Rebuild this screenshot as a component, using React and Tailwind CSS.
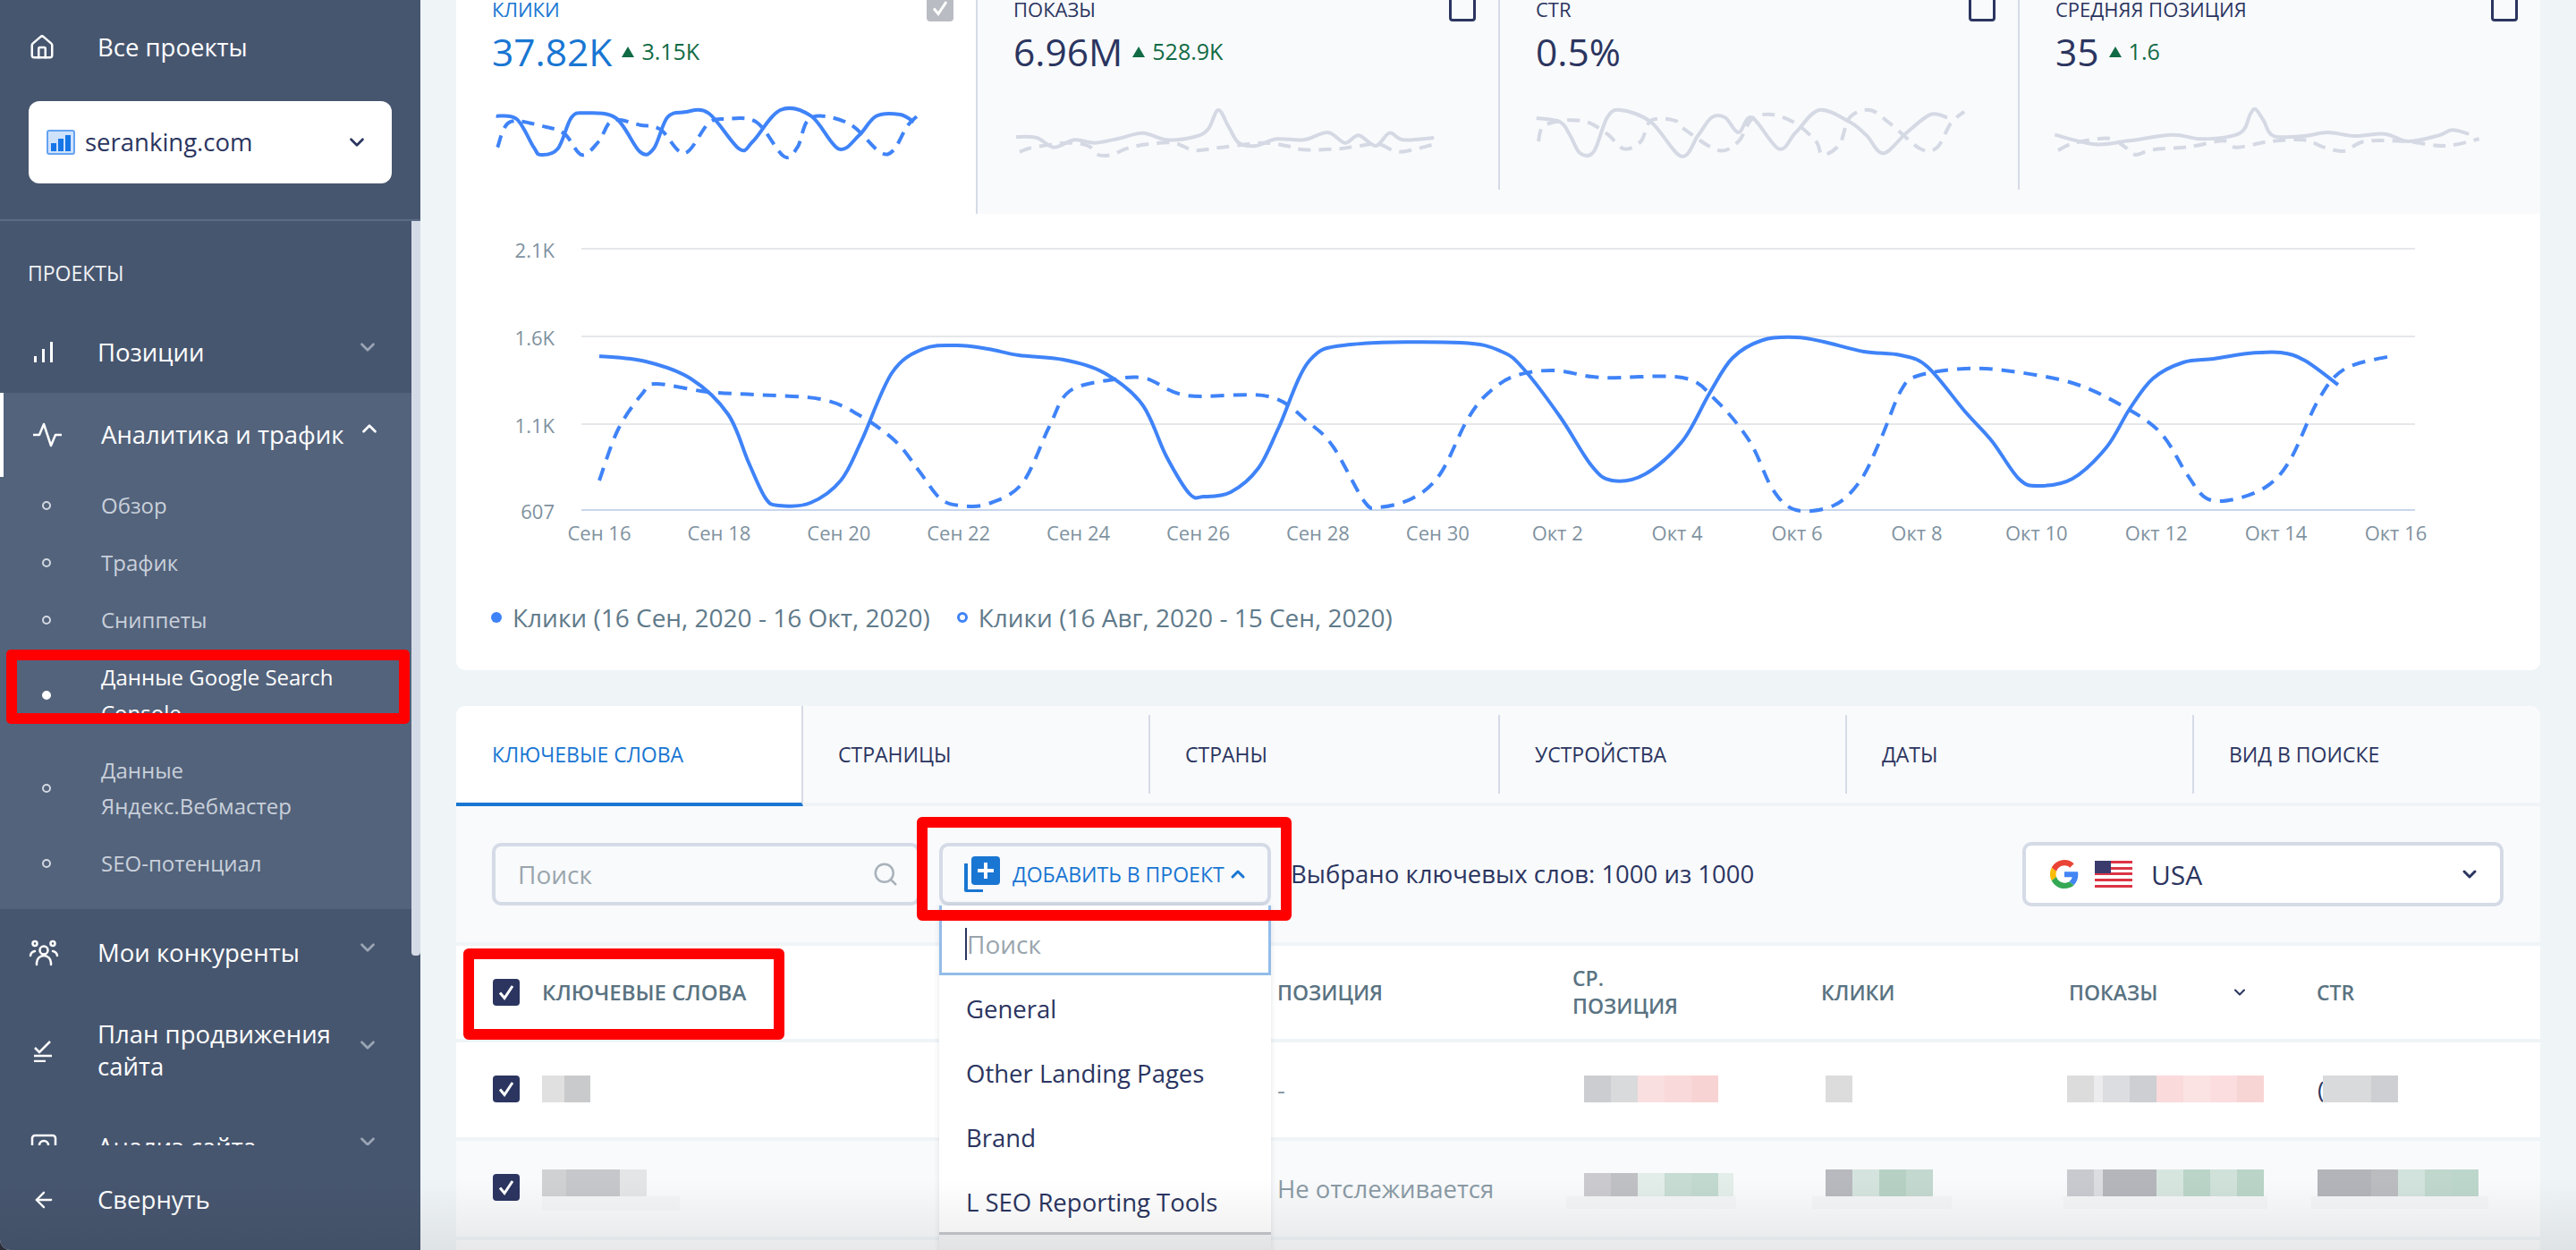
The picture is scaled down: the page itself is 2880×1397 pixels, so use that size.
import React from 'react';
import { ChevronDown, ChevronUp, Search, ArrowLeft, House } from 'lucide-react';

// turns a list of points into a smooth curve
const smooth = (pts) => {
    let d = `M${pts[0][0]} ${pts[0][1]}`;
    for (let i = 0; i < pts.length - 1; i++) {
        const p0 = pts[Math.max(i - 1, 0)];
        const p1 = pts[i];
        const p2 = pts[i + 1];
        const p3 = pts[Math.min(i + 2, pts.length - 1)];
        const c1x = p1[0] + (p2[0] - p0[0]) / 6;
        const c1y = p1[1] + (p2[1] - p0[1]) / 6;
        const c2x = p2[0] - (p3[0] - p1[0]) / 6;
        const c2y = p2[1] - (p3[1] - p1[1]) / 6;
        d += ` C${c1x} ${c1y} ${c2x} ${c2y} ${p2[0]} ${p2[1]}`;
    }
    return d;
};

const mainSolid = [[670,398],[722,404],[772,423],[814,463],[837,517],[856,557],[871,565],[906,562],[940,537],[963,493],[997,417],[1032,390],[1070,386],[1105,390],[1139,397],[1189,402],[1235,417],[1277,452],[1304,510],[1330,552],[1346,555],[1376,550],[1407,523],[1430,477],[1464,403],[1510,385],[1633,383],[1679,393],[1704,413],[1745,467],[1779,520],[1802,537],[1839,530],[1881,493],[1911,440],[1937,400],[1971,380],[2008,377],[2039,382],[2084,393],[2125,397],[2155,410],[2197,460],[2227,493],[2257,535],[2279,543],[2317,535],[2355,500],[2381,457],[2407,423],[2441,405],[2475,401],[2513,395],[2550,394],[2577,403],[2614,430]];
const mainDashed = [[670,537],[691,480],[718,440],[733,429],[791,438],[844,441],[917,446],[959,463],[1001,493],[1028,527],[1051,557],[1074,565],[1105,563],[1143,540],[1173,477],[1196,437],[1246,424],[1281,423],[1327,442],[1418,443],[1464,473],[1491,500],[1525,560],[1541,567],[1579,557],[1610,530],[1640,470],[1663,440],[1694,420],[1738,414],[1790,422],[1881,422],[1918,447],[1956,493],[1982,547],[2008,570],[2050,565],[2080,537],[2103,490],[2125,437],[2144,420],[2197,412],[2249,415],[2317,428],[2370,452],[2415,483],[2445,530],[2467,557],[2498,558],[2535,543],[2561,513],[2592,447],[2622,412],[2678,397]];

const metrics = [
    {
        label: 'КЛИКИ', value: '37.82K', delta: '3.15K', active: true, view: '60 370 640 180', w: 'w-[490px]',
        solid: [[70,405],[100,415],[125,510],[135,535],[160,515],[180,410],[200,395],[245,412],[280,525],[300,515],[320,410],[345,392],[380,395],[425,515],[445,490],[485,385],[530,405],[570,515],[600,470],[625,405],[660,400],[680,425]],
        dashed: [[72,510],[90,425],[140,440],[170,465],[195,535],[220,490],[240,420],[280,435],[310,450],[345,530],[380,430],[405,415],[450,425],[490,540],[510,510],[530,410],[585,430],[630,525],[650,520],[670,440],[685,405]],
    },
    {
        label: 'ПОКАЗЫ', value: '6.96M', delta: '528.9K', view: '822 370 640 180', w: 'w-[490px]',
        solid: [[830,475],[860,478],[885,510],[915,485],[945,495],[980,480],[1015,462],[1050,485],[1090,475],[1110,450],[1125,385],[1140,440],[1155,495],[1180,505],[1210,482],[1250,485],[1285,460],[1310,495],[1330,470],[1355,505],[1375,462],[1395,485],[1440,478]],
        dashed: [[835,525],[855,510],[905,495],[935,505],[950,535],[970,535],[990,515],[1020,500],[1060,495],[1090,520],[1130,510],[1190,495],[1225,505],[1250,518],[1300,515],[1330,505],[1360,500],[1390,525],[1440,500]],
    },
    {
        label: 'CTR', value: '0.5%', view: '20 370 664 180', w: 'w-[500px]',
        solid: [[25,412],[60,425],[75,470],[90,530],[110,525],[130,410],[150,385],[195,425],[240,540],[265,470],[285,410],[305,410],[325,460],[345,410],[385,515],[410,460],[445,385],[490,425],[515,470],[540,530],[575,460],[610,400],[635,410]],
        dashed: [[28,490],[35,440],[65,420],[100,425],[130,465],[155,515],[180,490],[195,420],[230,420],[245,450],[295,520],[325,490],[345,415],[375,400],[410,430],[440,490],[450,535],[475,500],[490,410],[520,385],[550,430],[595,515],[620,510],[640,430],[660,390]],
    },
    {
        label: 'СРЕДНЯЯ ПОЗИЦИЯ', value: '35', delta: '1.6', view: '797 370 664 180', w: 'w-[500px]',
        solid: [[800,468],[860,500],[910,488],[975,468],[1020,482],[1075,462],[1090,400],[1098,382],[1110,420],[1125,472],[1170,472],[1205,460],[1245,472],[1290,465],[1325,490],[1370,470],[1390,452],[1415,465]],
        dashed: [[805,520],[830,495],[880,480],[905,510],[920,535],[945,518],[1000,508],[1050,488],[1070,510],[1120,490],[1170,485],[1200,510],[1230,522],[1260,490],[1320,490],[1380,505],[1430,482]],
    },
];

const ticksX = ['Сен 16', 'Сен 18', 'Сен 20', 'Сен 22', 'Сен 24', 'Сен 26', 'Сен 28', 'Сен 30', 'Окт 2', 'Окт 4', 'Окт 6', 'Окт 8', 'Окт 10', 'Окт 12', 'Окт 14', 'Окт 16'];
const ticksY = [['2.1K', 278], ['1.6K', 376], ['1.1K', 474], ['607', 570]];
const tabs = ['КЛЮЧЕВЫЕ СЛОВА', 'СТРАНИЦЫ', 'СТРАНЫ', 'УСТРОЙСТВА', 'ДАТЫ', 'ВИД В ПОИСКЕ'];
const subItems = ['Обзор', 'Трафик', 'Сниппеты'];
const projects = ['General', 'Other Landing Pages', 'Brand', 'L SEO Reporting Tools'];

const Blur = ({ parts, className = '' }) => (
    <div className={`flex ${className}`}>
        {parts.map((p, i) => (
            <div key={i} className={p} />
        ))}
    </div>
);

const CheckBox = ({ className = '' }) => (
    <div className={`w-[30px] h-[30px] rounded-[4px] bg-[#2b3560] flex items-center justify-center shrink-0 ${className}`}>
        <svg width="22" height="22" viewBox="0 0 22 22" fill="none">
            <path d="M4 11.5l5 6L18 4" stroke="white" strokeWidth="3" />
        </svg>
    </div>
);

const Dot = ({ active }) => (
    <span className={`w-[10px] h-[10px] rounded-full border-2 ${active ? 'bg-white border-white' : 'border-[#d3d8e0]'}`} />
);

const MenuRow = ({ icon, heightClass, children }) => (
    <div className={`flex items-center pr-[36px] ${heightClass}`}>
        <div className="w-[109px] pl-[32px] shrink-0 flex items-center">{icon}</div>
        <div className="flex-1 text-[27.5px] leading-[36px] text-white">{children}</div>
        <ChevronDown size={26} strokeWidth={2.5} className="text-[#9aa5b5] mb-[12px]" />
    </div>
);

const SubRow = ({ heightClass, active, children }) => (
    <div className={`flex items-center ${heightClass}`}>
        <div className="w-[113px] pl-[47px] shrink-0 flex items-center"><Dot active={active} /></div>
        <div className={`text-[24px] leading-[40px] ${active ? 'text-white' : 'text-[#c9d0da]'}`}>{children}</div>
    </div>
);

const Sidebar = () => (
    <aside className="w-[470px] shrink-0 bg-[#47566f] flex flex-col h-full">
        <div className="h-[247px] shrink-0 border-b-2 border-[#5d6c86] px-[32px]">
            <div className="flex items-center h-[113px] pb-[8px]">
                <House size={30} strokeWidth={2} className="text-white" />
                <span className="ml-[47px] text-[27.5px] text-white">Все проекты</span>
            </div>
            <div className="h-[92px] bg-white rounded-[12px] flex items-center pl-[20px] pr-[26px]">
                <svg width="32" height="28" viewBox="0 0 32 28" className="shrink-0">
                    <rect x="1" y="1" width="30" height="26" rx="2" fill="#cfe2fb" stroke="#66a3f2" strokeWidth="2" />
                    <rect x="5" y="15" width="6" height="9" fill="#1676e8" />
                    <rect x="13" y="10" width="6" height="14" fill="#1676e8" />
                    <rect x="21" y="6" width="6" height="18" fill="#1676e8" />
                </svg>
                <span className="ml-[11px] flex-1 text-[27.5px] text-[#2b3560]">seranking.com</span>
                <ChevronDown size={26} strokeWidth={2.5} className="text-[#2b3560]" />
            </div>
        </div>
        <div className="flex h-[1033px] shrink-0 overflow-hidden">
            <div className="w-[460px] shrink-0">
                <div className="h-[102px] pl-[31px] pt-[14px] flex items-center text-[23px] text-[#f0f2f5]">ПРОЕКТЫ</div>
                <MenuRow
                    heightClass="h-[90px]"
                    icon={
                        <svg width="30" height="24" viewBox="0 0 30 24" fill="#fff" className="ml-[5px]">
                            <rect x="1" y="16" width="3" height="7" />
                            <rect x="10" y="8" width="3" height="15" />
                            <rect x="19" y="0" width="3" height="23" />
                        </svg>
                    }
                >
                    Позиции
                </MenuRow>
                <div className="bg-[#53637c] pb-[19px]">
                    <div className="h-[94px] flex items-center border-l-4 border-white pr-[40px]">
                        <div className="w-[109px] pl-[33px] shrink-0">
                            <svg width="32" height="28" viewBox="0 0 32 28" fill="none" stroke="#fff" strokeWidth="2.5" strokeLinejoin="round">
                                <path d="M0 14h7l5-12 8 24 5-12h7" />
                            </svg>
                        </div>
                        <div className="flex-1 text-[27.5px] text-white whitespace-nowrap">Аналитика и трафик</div>
                        <ChevronUp size={26} strokeWidth={2.5} className="text-white mb-[14px] -mr-[6px]" />
                    </div>
                    {subItems.map((s) => (
                        <SubRow key={s} heightClass="h-[64px]">{s}</SubRow>
                    ))}
                    <div className="relative">
                        <SubRow heightClass="h-[104px]" active>
                            Данные Google Search
                            <br />
                            Console
                        </SubRow>
                        <div className="absolute left-[7px] top-[1px] w-[451px] h-[83px] border-[12px] border-[#ff0000] rounded-[5px]" />
                    </div>
                    <SubRow heightClass="h-[104px]">
                        Данные
                        <br />
                        Яндекс.Вебмастер
                    </SubRow>
                    <SubRow heightClass="h-[64px]">SEO-потенциал</SubRow>
                </div>
                <MenuRow
                    heightClass="h-[98px]"
                    icon={
                        <svg width="34" height="30" viewBox="0 0 34 30" fill="none" stroke="#fff" strokeWidth="2.5" strokeLinecap="round">
                            <circle cx="17" cy="12" r="4.5" />
                            <path d="M9 28v-2a8 8 0 0 1 16 0v2" />
                            <circle cx="7" cy="4.5" r="2.5" />
                            <circle cx="27" cy="4.5" r="2.5" />
                            <path d="M2 18a6 6 0 0 1 5-5" />
                            <path d="M32 18a6 6 0 0 0-5-5" />
                        </svg>
                    }
                >
                    Мои конкуренты
                </MenuRow>
                <MenuRow
                    heightClass="h-[120px]"
                    icon={
                        <svg width="30" height="26" viewBox="0 0 30 26" fill="none" stroke="#fff" strokeWidth="2.5" className="ml-[5px]">
                            <path d="M2 10l5 5L19 3" />
                            <path d="M1 19h20" />
                            <path d="M1 25h13" />
                        </svg>
                    }
                >
                    План продвижения
                    <br />
                    сайта
                </MenuRow>
                <MenuRow
                    heightClass="h-[96px]"
                    icon={
                        <svg width="30" height="30" viewBox="0 0 30 30" fill="none" stroke="#fff" strokeWidth="2.5" className="ml-[2px]">
                            <rect x="2" y="2" width="26" height="26" rx="3" />
                            <circle cx="15" cy="13" r="5" />
                        </svg>
                    }
                >
                    Анализ сайта
                </MenuRow>
            </div>
            <div className="w-[10px] h-[821px] bg-[#d5dbe6] rounded-b-[4px]" />
        </div>
        <div className="h-[117px] flex items-center pl-[35px] pt-[5px]">
            <ArrowLeft size={28} strokeWidth={2} className="text-white" />
            <span className="ml-[46px] text-[27.5px] text-white">Свернуть</span>
        </div>
    </aside>
);

const Metric = ({ m }) => (
    <div className={`h-[239px] ${m.active ? 'bg-white border-r-2 border-[#d5dbe6]' : 'bg-[#f9fafc]'}`}>
        <div className={`h-[212px] pl-[40px] pr-[25px] ${m.active || m.label === 'СРЕДНЯЯ ПОЗИЦИЯ' ? '' : 'border-r-2 border-[#d5dbe6]'}`}>
            <div className="flex justify-between items-end h-[24px]">
                <span className={`self-start text-[22px] leading-[20px] ${m.active ? 'text-[#1976d2]' : 'text-[#2b3560]'}`}>{m.label}</span>
                {m.active ? (
                    <div className="w-[30px] h-[30px] rounded-[4px] bg-[#b9bcc2] flex items-center justify-center shrink-0">
                        <svg width="22" height="22" viewBox="0 0 22 22" fill="none">
                            <path d="M4 11.5l5 6L18 4" stroke="white" strokeWidth="3" />
                        </svg>
                    </div>
                ) : (
                    <div className="w-[30px] h-[30px] rounded-[4px] border-[3px] border-[#2b3560] shrink-0" />
                )}
            </div>
            <div className="flex items-center h-[50px] mt-[9px]">
                <span className={`text-[42.5px] ${m.active ? 'text-[#1976d2]' : 'text-[#2b3560]'}`}>{m.value}</span>
                {m.delta && (
                    <>
                        <span className="ml-[11px] w-0 h-0 border-x-[7px] border-x-transparent border-b-[12px] border-b-[#116b45]" />
                        <span className="ml-[8px] text-[25px] text-[#116b45]">{m.delta}</span>
                    </>
                )}
            </div>
            <svg viewBox={m.view} preserveAspectRatio="none" className={`block h-[60px] mt-[35px] -ml-[3px] ${m.w}`} fill="none">
                <path d={smooth(m.solid)} stroke={m.active ? '#3f83f8' : '#d5d9e4'} strokeWidth="4" vectorEffect="non-scaling-stroke" />
                <path d={smooth(m.dashed)} stroke={m.active ? '#3f83f8' : '#d5d9e4'} strokeWidth="4" strokeDasharray="14 9" vectorEffect="non-scaling-stroke" />
            </svg>
        </div>
    </div>
);

const Chart = () => (
    <div className="bg-white rounded-b-[10px] h-[510px]">
        <svg viewBox="510 239 2330 400" width="2330" height="400" className="block" fill="none">
            {ticksY.map(([label, y], i) => (
                <g key={label}>
                    <line x1="650" x2="2700" y1={y} y2={y} stroke={i === 3 ? '#c9d6ec' : '#e6e7ea'} strokeWidth="2" />
                    <text x="620" y={y + 10} textAnchor="end" fontSize="22" fill="#7f929f" fontFamily="Open Sans, sans-serif">{label}</text>
                </g>
            ))}
            {ticksX.map((label, i) => (
                <text key={label} x={670 + i * 133.9} y="604" textAnchor="middle" fontSize="22" fill="#7f929f" fontFamily="Open Sans, sans-serif">{label}</text>
            ))}
            <path d={smooth(mainDashed)} stroke="#3f83f8" strokeWidth="4" strokeDasharray="15 10" />
            <path d={smooth(mainSolid)} stroke="#3f83f8" strokeWidth="4" />
        </svg>
        <div className="flex items-center pl-[39px] pt-[33px] text-[28px] leading-[36px] text-[#5f7a8a]">
            <span className="w-[12px] h-[12px] rounded-full bg-[#3f83f8]" />
            <span className="ml-[12px]">Клики (16 Сен, 2020 - 16 Окт, 2020)</span>
            <span className="ml-[30px] w-[12px] h-[12px] rounded-full border-[3px] border-[#3f83f8]" />
            <span className="ml-[12px]">Клики (16 Авг, 2020 - 15 Сен, 2020)</span>
        </div>
    </div>
);

const Tabs = () => (
    <div className="grid grid-cols-[388px_386px_391px_388px_388px_1fr] h-[112px] bg-[#f9fafc] rounded-t-[10px] overflow-hidden">
        {tabs.map((t, i) => (
            <div key={t} className={i === 0 ? 'bg-white border-b-4 border-[#1976d2] border-r-2 border-r-[#d5dbe6]' : 'border-b-4 border-[#f0f4f8] pt-[10px]'}>
                <div className={`flex items-center pl-[39px] text-[23px] font-medium ${i === 0 ? 'h-[108px] text-[#1976d2] pl-[40px]' : 'h-[88px] text-[#2b3560]'} ${i > 1 ? 'border-l-2 border-[#d5dbe6]' : ''}`}>
                    {t}
                </div>
            </div>
        ))}
    </div>
);

const Toolbar = () => (
    <div className="h-[152px] bg-[#f9fafc] flex items-center pl-[40px] pr-[41px] mb-[4px]">
        <div className="w-[479px] h-[70px] shrink-0 rounded-[10px] border-4 border-[#d5dbe6] flex items-center justify-between pl-[25px] pr-[20px] text-[28px] text-[#9aa5ad]">
            Поиск
            <Search size={30} strokeWidth={2} className="text-[#a9b2bb]" />
        </div>
        <div className="relative ml-[21px] w-[371px] h-[70px] shrink-0">
            <div className="h-full rounded-[10px] border-4 border-[#d5dbe6] flex items-center pl-[24px] text-[#1976d2]">
                <svg width="40" height="40" viewBox="0 0 40 40" className="shrink-0">
                    <path d="M0 8v30a2 2 0 0 0 2 2h19v-3H4V8z" fill="#1976d2" />
                    <rect x="8" y="0" width="32" height="32" rx="4" fill="#1976d2" />
                    <path d="M24 7v18M15 16h18" stroke="#fff" strokeWidth="4" />
                </svg>
                <span className="ml-[14px] text-[23px] font-medium whitespace-nowrap">ДОБАВИТЬ В ПРОЕКТ</span>
                <ChevronUp size={24} strokeWidth={3} className="ml-[3px]" />
            </div>
            <div className="absolute left-[-25px] top-[-29px] w-[419px] h-[116px] border-[12px] border-[#ff0000] rounded-[6px] z-30" />
            <div className="absolute left-0 top-[70px] w-full z-20 bg-white shadow-[0_0_6px_rgba(30,40,70,0.12)]">
                <div className="h-[78px] border-[3px] border-t-0 border-[#93bce9] flex items-end pb-[14px] pl-[26px] text-[28px] text-[#9aa5ad]">
                    <span className="border-l-2 border-[#2b3560] leading-[36px]">Поиск</span>
                </div>
                <div className="pl-[30px] pt-[2px] h-[290px] flex flex-col text-[27.5px] text-[#2b3560] border-b-[3px] border-[#c5c7cc]">
                    {projects.map((p) => (
                        <div key={p} className="h-[72px] flex items-center shrink-0">{p}</div>
                    ))}
                </div>
                <div className="h-[40px] bg-[#f3f4f6]" />
            </div>
        </div>
        <span className="ml-[22px] text-[27.5px] text-[#2b3560] whitespace-nowrap">Выбрано ключевых слов: 1000 из 1000</span>
        <div className="ml-auto w-[538px] h-[72px] shrink-0 rounded-[10px] border-4 border-[#d5dbe6] bg-white flex items-center pl-[27px] pr-[22px]">
            <svg width="32" height="32" viewBox="0 0 48 48" className="shrink-0">
                <path fill="#EA4335" d="M24 9.5c3.5 0 6.7 1.2 9.2 3.6l6.9-6.9C35.9 2.4 30.5 0 24 0 14.6 0 6.5 5.4 2.6 13.2l8 6.2C12.5 13.7 17.800 9.5 24 9.500z" />
                <path fill="#4285F4" d="M47 24.500c0-1.600-.1-3.100-.4-4.500H24v9h13c-.6 3-2.300 5.500-4.800 7.200l7.700 6C44.400 38 47 31.800 47 24.500z" />
                <path fill="#FBBC05" d="M10.600 28.600c-.5-1.400-.8-3-.8-4.600s.3-3.200.8-4.600l-8-6.200C.9 16.500 0 20.100 0 24s.9 7.500 2.600 10.800z" />
                <path fill="#34A853" d="M24 48c6.500 0 11.900-2.100 15.900-5.800l-7.700-6c-2.100 1.400-4.900 2.300-8.200 2.300-6.200 0-11.500-4.200-13.400-9.900l-8 6.200C6.500 42.600 14.600 48 24 48z" />
            </svg>
            <svg width="42" height="30" viewBox="0 0 42 30" className="ml-[18px] shrink-0">
                <rect width="42" height="30" rx="2" fill="#fff" />
                <rect y="0" width="42" height="3" fill="#dc3545" />
                <rect y="7" width="42" height="3" fill="#dc3545" />
                <rect y="13" width="42" height="3" fill="#dc3545" />
                <rect y="20" width="42" height="3" fill="#dc3545" />
                <rect y="27" width="42" height="3" fill="#dc3545" />
                <rect width="18" height="14" fill="#3c3b6e" />
            </svg>
            <span className="ml-[21px] flex-1 text-[30px] text-[#2b3560]">USA</span>
            <ChevronDown size={24} strokeWidth={3} className="text-[#2b3560]" />
        </div>
    </div>
);

const cols = 'grid grid-cols-[877px_330px_278px_277px_277px_1fr] pl-[41px]';

const Table = () => (
    <div>
        <div className={`${cols} h-[104px] bg-white mb-[4px] items-center text-[23px] font-semibold text-[#5a7382]`}>
            <div className="flex items-center relative">
                <CheckBox />
                <span className="ml-[25px] text-[24px]">КЛЮЧЕВЫЕ СЛОВА</span>
                <div className="absolute left-[-33px] top-[-31px] w-[359px] h-[102px] border-[12px] border-[#ff0000] rounded-[6px]" />
            </div>
            <span>ПОЗИЦИЯ</span>
            <span className="leading-[31px]">СР.<br />ПОЗИЦИЯ</span>
            <span>КЛИКИ</span>
            <div className="flex items-center">
                ПОКАЗЫ
                <ChevronDown size={20} strokeWidth={2.5} className="ml-[82px] text-[#2b3560]" />
            </div>
            <span>CTR</span>
        </div>
        <div className={`${cols} h-[106px] bg-white mb-[4px] items-start`}>
            <div className="flex pt-[37px]">
                <CheckBox />
                <Blur className="ml-[25px] h-[30px]" parts={['w-[25px] bg-[#e0e0e0]', 'w-[29px] bg-[#c9cacb]']} />
            </div>
            <div className="h-full flex items-center text-[27.5px] text-[#8a9aa5]">-</div>
            <Blur className="ml-[13px] mt-[37px] h-[30px]" parts={['w-[30px] bg-[#cbcdd0]', 'w-[30px] bg-[#d9dadc]', 'w-[30px] bg-[#fadfe0]', 'w-[30px] bg-[#f9d9da]', 'w-[30px] bg-[#f8d3d3]']} />
            <Blur className="ml-[5px] mt-[37px] h-[30px]" parts={['w-[30px] bg-[#dcdcdc]']} />
            <Blur className="-ml-[2px] mt-[37px] h-[30px]" parts={['w-[30px] bg-[#dcdcdc]', 'w-[10px] bg-[#ececee]', 'w-[30px] bg-[#dcdde0]', 'w-[30px] bg-[#cdcfd2]', 'w-[30px] bg-[#fadadb]', 'w-[30px] bg-[#fbe3e3]', 'w-[30px] bg-[#fbdde0]', 'w-[30px] bg-[#f8d5d5]']} />
            <div className="flex ml-[1px] mt-[37px] h-[30px]">
                <span className="w-[6px] overflow-hidden text-[26px] leading-[30px] text-[#2b3560]">(</span>
                <Blur className="h-[30px]" parts={['w-[54px] bg-[#d9dadc]', 'w-[30px] bg-[#cdcfd2]']} />
            </div>
        </div>
        <div className={`${cols} h-[107px] bg-[#f9fafc] mb-[4px] items-start`}>
            <div className="flex pt-[37px]">
                <CheckBox />
                <div className="ml-[25px] -mt-[5px]">
                    <Blur className="h-[30px]" parts={['w-[27px] bg-[#d0d1d3]', 'w-[60px] bg-[#c6c7ca]', 'w-[30px] bg-[#e4e5e6]']} />
                    <div className="h-[16px] w-[154px] bg-[#f4f5f6]" />
                </div>
            </div>
            <div className="h-full flex items-center text-[27.5px] text-[#8a9aa5]">Не отслеживается</div>
            <div className="ml-[13px] mt-[36px]">
                <Blur className="h-[26px]" parts={['w-[30px] bg-[#cbcbcf]', 'w-[30px] bg-[#bfc0c4]', 'w-[30px] bg-[#e2ece9]', 'w-[30px] bg-[#c7dcd3]', 'w-[30px] bg-[#c2d9cf]', 'w-[17px] bg-[#e3ede9]']} />
                <div className="h-[14px] w-[190px] -ml-[20px] bg-[#f4f5f6]" />
            </div>
            <div className="ml-[5px] mt-[32px]">
                <Blur className="h-[30px]" parts={['w-[30px] bg-[#b8b9be]', 'w-[30px] bg-[#d4e3dd]', 'w-[30px] bg-[#b6d1c4]', 'w-[30px] bg-[#c3d8cf]']} />
                <div className="h-[14px] w-[156px] -ml-[15px] bg-[#f4f5f6]" />
            </div>
            <div className="-ml-[2px] mt-[32px]">
                <Blur className="h-[30px]" parts={['w-[30px] bg-[#c9cacf]', 'w-[10px] bg-[#dcdde0]', 'w-[60px] bg-[#b5b6bc]', 'w-[30px] bg-[#d7e5df]', 'w-[30px] bg-[#bad4c8]', 'w-[30px] bg-[#cfe1d9]', 'w-[30px] bg-[#bad4c8]']} />
                <div className="h-[14px] w-[228px] -ml-[4px] bg-[#f4f5f6]" />
            </div>
            <div className="ml-[1px] mt-[32px]">
                <Blur className="h-[30px]" parts={['w-[60px] bg-[#b3b4b9]', 'w-[30px] bg-[#bbbcc0]', 'w-[30px] bg-[#d2e2dc]', 'w-[30px] bg-[#bfd7cc]', 'w-[30px] bg-[#bdd6cb]']} />
                <div className="h-[14px] w-[198px] -ml-[7px] bg-[#f4f5f6]" />
            </div>
        </div>
        <div className="h-[40px] bg-[#f9fafc]" />
    </div>
);

export default function App() {
    return (
        <div className="w-[2880px] h-[1397px] bg-[#2a2c38] overflow-hidden">
            <div className="relative flex h-full bg-[#eff4f7] rounded-bl-[12px] overflow-hidden font-['Open_Sans',sans-serif]">
                <Sidebar />
                <main className="flex-1 min-w-0 px-[40px]">
                    <div className="grid grid-cols-[583px_584px_581px_582px]">
                        {metrics.map((m) => (
                            <Metric key={m.label} m={m} />
                        ))}
                    </div>
                    <Chart />
                    <div className="mt-[40px]">
                        <Tabs />
                        <Toolbar />
                        <Table />
                    </div>
                </main>
                <div className="absolute inset-x-0 bottom-0 h-[80px] bg-linear-to-b from-black/0 to-black/[0.07] pointer-events-none z-40" />
            </div>
        </div>
    );
}
